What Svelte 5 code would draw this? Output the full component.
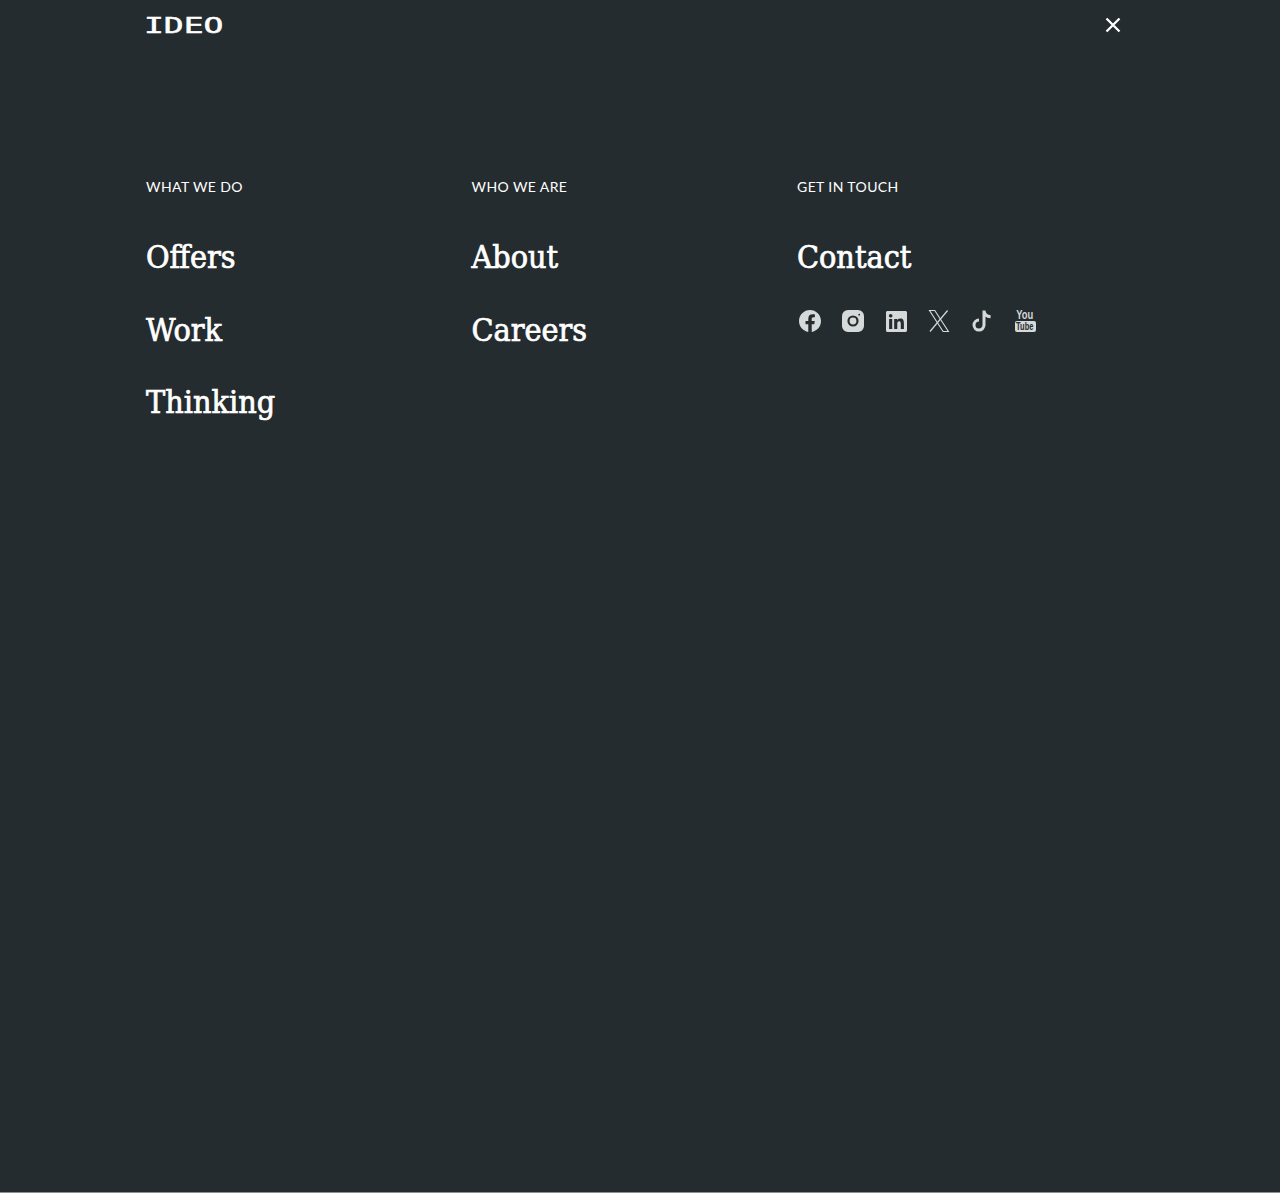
<script>
  const columns = [
    { label: 'WHAT WE DO', links: ['Offers', 'Work', 'Thinking'] },
    { label: 'WHO WE ARE', links: ['About', 'Careers'] },
    { label: 'GET IN TOUCH', links: ['Contact'], social: true }
  ];
</script>

<div class="page">
  <header class="top">
    <span class="logo">IDEO</span>
    <button class="close" aria-label="Close">
      <svg viewBox="0 0 16 16" width="16" height="16"><path d="M1.5 1.5l13 13M14.5 1.5l-13 13" stroke="#fff" stroke-width="2.3" fill="none"/></svg>
    </button>
  </header>
  <nav class="cols">
    {#each columns as col}
      <section class="col">
        <h2 class="label">{col.label}</h2>
        <ul class="links">
          {#each col.links as link}
            <li>{link}</li>
          {/each}
        </ul>
        {#if col.social}
          <div class="social">
            <span class="ico"><svg viewBox="0 0 24 24" width="22" height="22"><path d="M24 12.073c0-6.627-5.373-12-12-12s-12 5.373-12 12c0 5.99 4.388 10.954 10.125 11.854v-8.385H7.078v-3.47h3.047V9.43c0-3.007 1.792-4.669 4.533-4.669 1.312 0 2.686.235 2.686.235v2.953H15.83c-1.491 0-1.956.925-1.956 1.874v2.25h3.328l-.532 3.47h-2.796v8.385C19.612 23.027 24 18.062 24 12.073z"/></svg></span>
            <span class="ico"><svg viewBox="0 0 22 22" width="22" height="22"><path fill-rule="evenodd" d="M6 0h10a6 6 0 0 1 6 6v10a6 6 0 0 1-6 6H6a6 6 0 0 1-6-6V6a6 6 0 0 1 6-6zm5 5.4a5.6 5.6 0 1 0 0 11.2 5.6 5.6 0 0 0 0-11.2zm0 2.2a3.4 3.4 0 1 1 0 6.8 3.4 3.4 0 0 1 0-6.8zm6.2-3.8a.9.9 0 1 0 0 1.8.9.9 0 0 0 0-1.8z"/></svg></span>
            <span class="ico"><svg viewBox="0 0 24 24" width="21" height="21"><path d="M20.447 20.452h-3.554v-5.569c0-1.328-.027-3.037-1.852-3.037-1.853 0-2.136 1.445-2.136 2.939v5.667H9.351V9h3.414v1.561h.046c.477-.9 1.637-1.85 3.37-1.85 3.601 0 4.267 2.37 4.267 5.455v6.286zM5.337 7.433c-1.144 0-2.063-.926-2.063-2.065 0-1.138.92-2.063 2.063-2.063 1.14 0 2.064.925 2.064 2.063 0 1.139-.925 2.065-2.064 2.065zm1.782 13.019H3.555V9h3.564v11.452zM22.225 0H1.771C.792 0 0 .774 0 1.729v20.542C0 23.227.792 24 1.771 24h20.451C23.2 24 24 23.227 24 22.271V1.729C24 .774 23.2 0 22.222 0h.003z"/></svg></span>
            <span class="ico"><svg viewBox="0 0 22 24" width="22" height="24"><g fill="none" stroke="currentColor" stroke-width="1.1"><path d="M1.5 1.5h5.3l13.6 21h-5.3z"/><path d="M19.6 1.5 2 22.5" stroke-width="1.2"/></g></svg></span>
            <span class="ico"><svg viewBox="0 0 22 24" width="22" height="24"><path fill="none" stroke="currentColor" stroke-width="3" d="M13 1.5v14.6a5 5 0 1 1-5-5M13 2c.4 3.2 3 5.6 6.6 5.8"/></svg></span>
            <span class="ico yt">
              <span class="you">You</span>
              <span class="tube"><span class="tube-text">Tube</span></span>
            </span>
          </div>
        {/if}
      </section>
    {/each}
  </nav>
</div>

<style>
  :global(body) { background: #fff; margin: 0; }
  .page {
    height: 1192px;
    background: #252c2f;
    border-bottom: 1px solid #8d9192;
    padding: 0 146px;
    color: #fff;
    overflow: hidden;
  }
  .top {
    height: 50px;
    display: flex;
    align-items: center;
    justify-content: space-between;
    padding-right: 13px;
  }
  .logo {
    display: block;
    margin: 2px 0 0 -2px;
    font-family: "DejaVu Sans Mono", monospace;
    font-size: 22px;
    font-weight: 400;
    line-height: 48px;
    -webkit-text-stroke: 0.5px #fff;
    transform: scaleX(1.5);
    transform-origin: left center;
    color: #fff;
  }
  .close {
    background: none;
    border: 0;
    padding: 0;
    width: 16px;
    height: 16px;
    display: block;
  }
  .close svg { display: block; }
  .cols {
    display: grid;
    grid-template-columns: repeat(3, 325.5px);
    padding-top: 128px;
  }
  .label {
    margin: 0;
    font-family: Lato, "Liberation Sans", sans-serif;
    font-weight: 400;
    font-size: 14px;
    line-height: 17px;
    letter-spacing: 0.4px;
    color: #fff;
  }
  .links {
    list-style: none;
    margin: 0;
    padding: 42px 0 0;
    display: flex;
    flex-direction: column;
    gap: 32.5px;
  }
  .links li {
    font-family: "DejaVu Serif Condensed", "DejaVu Serif", serif;
    font-stretch: condensed;
    font-weight: 400;
    font-size: 32px;
    line-height: 40px;
    -webkit-text-stroke: 0.7px #fff;
  }
  .social {
    display: flex;
    gap: 17px;
    margin-top: 30px;
    color: #d6d9d9;
    height: 28px;
    align-items: center;
  }
  .ico {
    width: 26px;
    height: 26px;
    display: flex;
    align-items: center;
    justify-content: center;
  }
  .ico svg { display: block; fill: currentColor; }
  .yt {
    flex-direction: column;
    font-family: "Liberation Sans", sans-serif;
    font-weight: 700;
    margin-top: -2px;
  }
  .you {
    font-size: 13px;
    line-height: 12px;
    transform: scaleX(0.72);
  }
  .tube {
    display: block;
    background: #d6d9d9;
    color: #252c2f;
    border-radius: 2px;
    width: 21px;
    height: 11px;
    line-height: 11px;
    font-size: 11px;
    text-align: center;
    white-space: nowrap;
  }
  .tube-text {
    display: inline-block;
    transform: scaleX(0.68);
    margin: 0 -4px;
  }
</style>
